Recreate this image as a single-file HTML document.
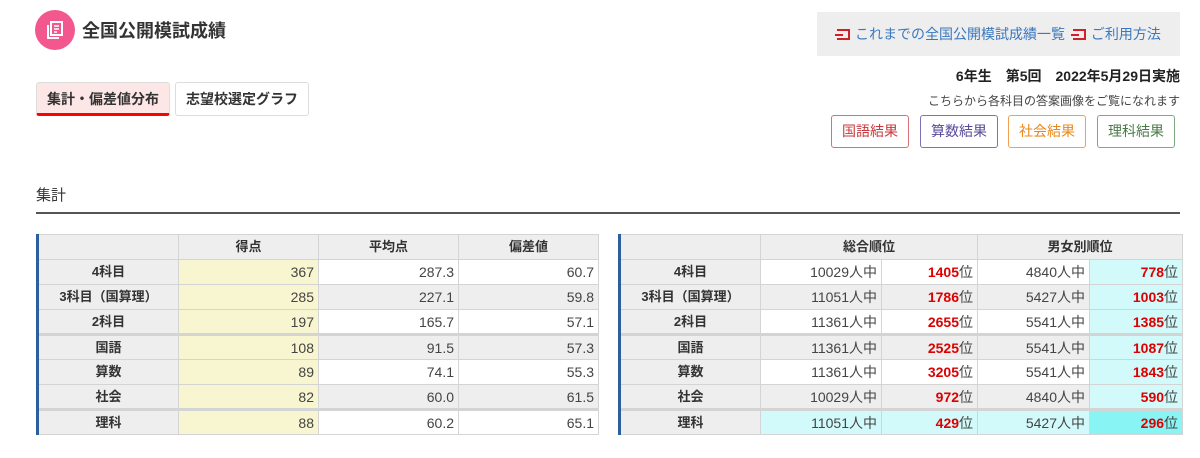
<!DOCTYPE html>
<html><head><meta charset="utf-8"><style>
*{margin:0;padding:0;box-sizing:border-box}
body{width:1200px;height:458px;background:#fff;font-family:"Liberation Sans","Noto Sans CJK JP",sans-serif;color:#333;position:relative;overflow:hidden}
.abs{position:absolute}
.icon{left:35px;top:10px;width:40px;height:40px;border-radius:50%;background:#f2588d}
.title{left:82px;top:17px;font-size:18px;font-weight:bold;color:#333}
.links{left:817px;top:12px;width:363px;height:44px;background:#eeeeee;font-size:14px;color:#3a78c0;line-height:44px;padding-left:20px;white-space:nowrap}
.li{display:inline-block;width:13px;height:11px;border:2px solid #d0202a;border-left:none;vertical-align:-1px;margin-right:5px;position:relative}
.li:before{content:"";position:absolute;left:-2px;top:3px;width:8px;height:2px;background:#d0202a}
.tab{top:82px;height:34px;border:1px solid #ddd;border-radius:3px;font-size:14px;font-weight:bold;line-height:32px;text-align:center;color:#333}
.t1{left:36px;width:134px;background:#fde6e6;border-bottom:3px solid #f00}
.t2{left:175px;width:134px;background:#fff}
.info{right:20px;top:66px;font-size:14px;font-weight:bold;color:#222;white-space:pre}
.sub{right:20px;top:92px;font-size:12px;color:#444}
.btn{top:115px;height:33px;width:78px;border:1px solid;border-radius:3px;font-size:14px;text-align:center;line-height:31px}
.sec{left:36px;top:184px;font-size:15px;color:#333}
.rule{left:36px;top:212px;width:1144px;height:2px;background:#555}
table{position:absolute;border-collapse:collapse;table-layout:fixed;font-size:14px}
td,th{border:1px solid #d4d4d4;height:25px;padding:0 4px;text-align:right;color:#444;font-weight:normal;vertical-align:middle;line-height:16px}
th{background:#eee;text-align:center;font-weight:bold;color:#333;font-size:13px}
tr>:first-child{border-left:3px solid #2b5f9e}
tr.w td{background:#fff}
tr.g td{background:#eee}
td.y{background:#f8f6d0!important}
td.c{background:#d2fafa!important}
td.cc{background:#88f4f4!important}
tr.tk td,tr.tk th:not(:first-child){border-top:3px solid #d4d4d4}
tr.tk th:first-child{border-top:3px solid #d4d4d4}
b.r{color:#d00;font-weight:bold}
</style></head><body>
<div class="abs icon"><svg width="40" height="40" viewBox="0 0 40 40"><rect x="16" y="12" width="11" height="13" fill="none" stroke="#fff" stroke-width="2"/><path d="M13 15v13h11" fill="none" stroke="#fff" stroke-width="2"/><path d="M19 16h5M19 19h5M19 22h3" stroke="#fff" stroke-width="1.5"/></svg></div>
<div class="abs title">全国公開模試成績</div>
<div class="abs links"><span class="li"></span>これまでの全国公開模試成績一覧 <span class="li" style="margin-left:4px"></span>ご利用方法</div>
<div class="abs tab t1">集計・偏差値分布</div>
<div class="abs tab t2">志望校選定グラフ</div>
<div class="abs info">6年生　第5回　2022年5月29日実施</div>
<div class="abs sub">こちらから各科目の答案画像をご覧になれます</div>
<div class="abs btn" style="left:831px;color:#c8383c;border-color:#d87075">国語結果</div>
<div class="abs btn" style="left:920px;color:#5a4a9a;border-color:#8070b8">算数結果</div>
<div class="abs btn" style="left:1008px;color:#e8881a;border-color:#f0a050">社会結果</div>
<div class="abs btn" style="left:1097px;color:#4a7a4a;border-color:#80a880">理科結果</div>
<div class="abs sec">集計</div>
<div class="abs rule"></div>

<table style="left:36px;top:234px;width:561px">
<colgroup><col style="width:141px"><col style="width:140px"><col style="width:140px"><col style="width:140px"></colgroup>
<tr><th></th><th>得点</th><th>平均点</th><th>偏差値</th></tr>
<tr class="w"><th>4科目</th><td class="y">367</td><td>287.3</td><td>60.7</td></tr>
<tr class="g"><th>3科目（国算理）</th><td class="y">285</td><td>227.1</td><td>59.8</td></tr>
<tr class="w"><th>2科目</th><td class="y">197</td><td>165.7</td><td>57.1</td></tr>
<tr class="g tk"><th>国語</th><td class="y">108</td><td>91.5</td><td>57.3</td></tr>
<tr class="w"><th>算数</th><td class="y">89</td><td>74.1</td><td>55.3</td></tr>
<tr class="g"><th>社会</th><td class="y">82</td><td>60.0</td><td>61.5</td></tr>
<tr class="w tk"><th>理科</th><td class="y">88</td><td>60.2</td><td>65.1</td></tr>
</table>

<table style="left:618px;top:234px;width:563px">
<colgroup><col style="width:141px"><col style="width:121px"><col style="width:96px"><col style="width:112px"><col style="width:93px"></colgroup>
<tr><th></th><th colspan="2">総合順位</th><th colspan="2">男女別順位</th></tr>
<tr class="w"><th>4科目</th><td>10029人中</td><td><b class="r">1405</b>位</td><td>4840人中</td><td class="c"><b class="r">778</b>位</td></tr>
<tr class="g"><th>3科目（国算理）</th><td>11051人中</td><td><b class="r">1786</b>位</td><td>5427人中</td><td class="c"><b class="r">1003</b>位</td></tr>
<tr class="w"><th>2科目</th><td>11361人中</td><td><b class="r">2655</b>位</td><td>5541人中</td><td class="c"><b class="r">1385</b>位</td></tr>
<tr class="g tk"><th>国語</th><td>11361人中</td><td><b class="r">2525</b>位</td><td>5541人中</td><td class="c"><b class="r">1087</b>位</td></tr>
<tr class="w"><th>算数</th><td>11361人中</td><td><b class="r">3205</b>位</td><td>5541人中</td><td class="c"><b class="r">1843</b>位</td></tr>
<tr class="g"><th>社会</th><td>10029人中</td><td><b class="r">972</b>位</td><td>4840人中</td><td class="c"><b class="r">590</b>位</td></tr>
<tr class="w tk"><th>理科</th><td class="c">11051人中</td><td class="c"><b class="r">429</b>位</td><td class="c">5427人中</td><td class="cc"><b class="r">296</b>位</td></tr>
</table>
</body></html>
